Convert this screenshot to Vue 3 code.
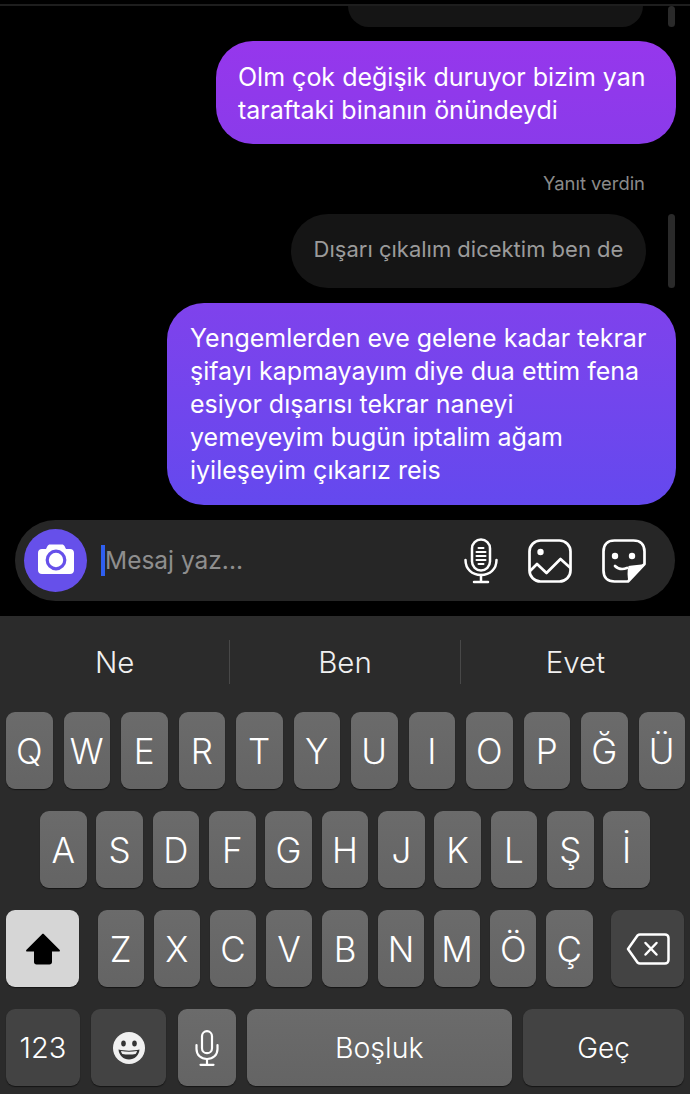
<template>
  <div class="screen">
    <section class="chat">
      <div class="top-line"></div>
      <div class="row row-cut">
        <div class="bubble-in cut"></div>
        <div class="reply-bar cut-bar"></div>
      </div>
      <div class="bubble-out first">
        Olm çok değişik duruyor bizim yan<br />taraftaki binanın önündeydi
      </div>
      <div class="reply-label">Yanıt verdin</div>
      <div class="row">
        <div class="bubble-in">Dışarı çıkalım dicektim ben de</div>
        <div class="reply-bar"></div>
      </div>
      <div class="bubble-out second">
        Yengemlerden eve gelene kadar tekrar<br />
        şifayı kapmayayım diye dua ettim fena<br />
        esiyor dışarısı tekrar naneyi<br />
        yemeyeyim bugün iptalim ağam<br />
        iyileşeyim çıkarız reis
      </div>
    </section>

    <div class="composer">
      <div class="camera">
        <svg class="camera-icon" width="38" height="32" viewBox="0 0 38 32">
          <path
            fill="#fff"
            d="M13 1.500h12c1.200 0 2 .6 2.500 1.600L29 6h4c2.500 0 4 1.600 4 4v17c0 2.500-1.500 4-4 4H5c-2.500 0-4-1.500-4-4V10c0-2.400 1.500-4 4-4h4l1.500-2.900C11 2.100 11.800 1.500 13 1.500z"
          />
          <circle cx="19" cy="17" r="8.800" fill="none" stroke="#6650ea" stroke-width="3.200" />
        </svg>
      </div>
      <div class="caret"></div>
      <div class="placeholder">Mesaj yaz...</div>
      <div class="composer-icons">
        <svg width="34" height="46" viewBox="0 0 34 46" fill="none" stroke="#fff" stroke-width="2.500" stroke-linecap="round">
          <rect x="8" y="1.500" width="18" height="31" rx="9" />
          <path d="M1.500 22c0 9 6.500 15 15.500 15s15.500-6 15.500-15" />
          <path d="M17 37v7M10 44h14" />
          <path stroke-width="2" d="M14.500 10h5M12.500 14h9M12.500 18h9M12.500 22h9M14.500 26h5" />
        </svg>
        <svg width="44" height="44" viewBox="0 0 44 44" fill="none" stroke="#fff" stroke-width="2.700">
          <rect x="1.500" y="1.500" width="41" height="41" rx="11" />
          <path d="M2 32l7-7 9.500 9 14-14 10 9" stroke-linejoin="round" />
          <circle cx="12.500" cy="13" r="3.200" fill="#fff" stroke="none" />
        </svg>
        <svg width="44" height="44" viewBox="0 0 44 44" fill="none" stroke="#fff" stroke-width="2.700">
          <path d="M42.500 25V12.500c0-7-4-11-11-11h-19c-7 0-11 4-11 11v19c0 7 4 11 11 11H26z" stroke-linejoin="round" />
          <path fill="#fff" stroke="none" d="M42.500 25c-3 1-12 1-16 2-1.500 5-1 11 0 15.500z" />
          <circle cx="13" cy="17" r="3.200" fill="#fff" stroke="none" />
          <circle cx="30" cy="17" r="3.200" fill="#fff" stroke="none" />
          <path d="M13 27c3 3 8 3.500 12 2" stroke-linecap="round" />
        </svg>
      </div>
    </div>

    <section class="keyboard">
      <div class="suggestions">
        <div class="suggestion">Ne</div>
        <div class="suggestion">Ben</div>
        <div class="suggestion">Evet</div>
      </div>
      <div class="keys-row">
        <button v-for="k in rowOne" :key="k" class="key">{{ k }}</button>
      </div>
      <div class="keys-row indented">
        <button v-for="k in rowTwo" :key="k" class="key">{{ k }}</button>
      </div>
      <div class="keys-row row-three">
        <button class="key shift">
          <svg width="36" height="32" viewBox="0 0 36 32">
            <path
              d="M17 1.200c.6-.6 1.400-.6 2 0l15.500 15.500c.8.800.4 1.800-.7 1.800H27v10.500c0 1.500-1 2.500-2.500 2.500h-13C10 31.500 9 30.500 9 29V18.500H2.200c-1.100 0-1.500-1-.7-1.800z"
              fill="#000"
            />
          </svg>
        </button>
        <div class="letters">
          <button v-for="k in rowThree" :key="k" class="key">{{ k }}</button>
        </div>
        <button class="key dark backspace">
          <svg width="44" height="32" viewBox="0 0 44 32" fill="none" stroke="#fff" stroke-width="2.500">
            <path d="M14 1.500h25c2 0 3.500 1.500 3.500 3.500v22c0 2-1.500 3.500-3.500 3.500H14c-1 0-1.700-.3-2.500-1L2 16 11.500 2.500c.8-.7 1.500-1 2.500-1z" stroke-linejoin="round" />
            <path d="M19.500 10l11 11.500M30.500 10l-11 11.500" stroke-linecap="round" />
          </svg>
        </button>
      </div>
      <div class="keys-row bottom">
        <button class="key dark num">123</button>
        <button class="key dark emoji">
          <svg width="32" height="32" viewBox="0 0 32 32">
            <circle cx="16" cy="16" r="16" fill="#f0f0f0" />
            <ellipse cx="10.500" cy="11.500" rx="2.300" ry="3" fill="#333" />
            <ellipse cx="21.500" cy="11.500" rx="2.300" ry="3" fill="#333" />
            <path d="M5.500 17.500c6 1.500 15 1.500 21 0-.5 6-5 10-10.500 10s-10-4-10.500-10z" fill="#333" />
            <path d="M8 19c5 1 11 1 16 0-.3 1.500-.8 2.300-1.500 3-4 .8-9 .8-13 0-.7-.7-1.200-1.500-1.500-3z" fill="#f0f0f0" />
          </svg>
        </button>
        <button class="key voice">
          <svg width="24" height="36" viewBox="0 0 24 36" fill="none" stroke="#fff" stroke-width="2.200" stroke-linecap="round">
            <rect x="7" y="1.200" width="10" height="22" rx="5" />
            <path d="M1.500 15v4c0 6 4.500 10 10.500 10s10.500-4 10.500-10v-4" />
            <path d="M12 29v5.500M5.500 34.800h13" />
          </svg>
        </button>
        <button class="key space">Boşluk</button>
        <button class="key dark go">Geç</button>
      </div>
    </section>
  </div>
</template>

<script setup>
const rowOne = ['Q', 'W', 'E', 'R', 'T', 'Y', 'U', 'I', 'O', 'P', 'Ğ', 'Ü']
const rowTwo = ['A', 'S', 'D', 'F', 'G', 'H', 'J', 'K', 'L', 'Ş', 'İ']
const rowThree = ['Z', 'X', 'C', 'V', 'B', 'N', 'M', 'Ö', 'Ç']
</script>

<style>
html,
body {
  background: #000;
}
</style>

<style scoped>
.screen {
  width: 690px;
  height: 1094px;
  overflow: hidden;
  background: #000;
  font-family: Inter, Roboto, "Liberation Sans", sans-serif;
  display: flex;
  flex-direction: column;
}

.chat {
  height: 520px;
  flex: none;
  display: flex;
  flex-direction: column;
  align-items: flex-end;
}

.top-line {
  align-self: stretch;
  height: 2px;
  margin-top: 4px;
  background: #1e1e1e;
}

.row {
  display: flex;
  align-items: stretch;
  gap: 22px;
  padding-right: 15px;
}

.row-cut {
  height: 21px;
}

.bubble-in {
  width: 355px;
  height: 74px;
  box-sizing: border-box;
  border-radius: 37px;
  background: #151515;
  color: #9b9b9b;
  font-size: 22px;
  line-height: 70px;
  text-align: center;
  white-space: nowrap;
}

.bubble-in.cut {
  width: 295px;
  height: 21px;
  margin-right: 3px;
  border-radius: 0 0 32px 32px;
}

.reply-bar {
  width: 7px;
  border-radius: 4px;
  background: #2a2a2a;
}

.bubble-out {
  margin-right: 14px;
  box-sizing: border-box;
  border-radius: 37px;
  color: #fff;
  font-size: 25px;
  line-height: 33px;
  white-space: nowrap;
}

.bubble-out.first {
  width: 460px;
  height: 103px;
  margin-top: 14px;
  padding: 20px 0 0 22px;
  background: linear-gradient(180deg, #9637ec, #8a3bea);
}

.bubble-out.second {
  width: 509px;
  height: 202px;
  margin-top: 15px;
  padding: 19px 0 0 23px;
  background: linear-gradient(180deg, #7f42ec, #6449ee);
}

.reply-label {
  margin: 28px 45px 20px 0;
  height: 22px;
  color: #8a8a8a;
  font-size: 18.400px;
  line-height: 22px;
}

.composer {
  height: 81px;
  flex: none;
  margin: 0 15px;
  display: flex;
  align-items: center;
  border-radius: 41px;
  background: #262626;
  padding-left: 9px;
}

.camera {
  width: 63px;
  height: 63px;
  flex: none;
  border-radius: 50%;
  background: #6650ea;
  display: flex;
  align-items: center;
  justify-content: center;
}

.camera-icon {
  margin-bottom: 3px;
}

.caret {
  width: 4px;
  height: 31px;
  margin-left: 14px;
  background: #2f5ff0;
}

.placeholder {
  margin-bottom: 2px;
  color: #8e8e8e;
  font-size: 24.500px;
  flex: 1;
}

.composer-icons {
  display: flex;
  align-items: center;
  gap: 30px;
  padding-right: 29px;
}

.keyboard {
  flex: 1;
  margin-top: 15px;
  background: #2b2b2b;
}

.suggestions {
  display: flex;
  height: 96px;
  box-sizing: border-box;
  padding-top: 24px;
}

.suggestion {
  flex: 1;
  height: 44px;
  text-align: center;
  color: #f0f0f0;
  font-size: 29.500px;
  font-weight: 350;
  line-height: 44px;
  border-right: 1px solid #484848;
}

.suggestion:last-child {
  border-right: 0;
}

.keys-row {
  display: flex;
  justify-content: space-between;
  height: 77px;
  margin-bottom: 22px;
  padding: 0 5px 0 6px;
}

.keys-row.indented {
  padding: 0 40px;
}

.keys-row.row-three,
.keys-row.bottom {
  padding: 0 6px;
}

.key {
  width: 46.500px;
  height: 77px;
  padding: 0;
  border: 0;
  border-radius: 9px;
  background: linear-gradient(180deg, #6b6b6b, #646464);
  box-shadow: 0 1px 1px #151515;
  color: #fff;
  font-family: inherit;
  font-size: 35px;
  font-weight: 350;
  display: flex;
  align-items: center;
  justify-content: center;
}

.key.dark {
  background: #434343;
}

.key.shift {
  width: 73px;
  background: #d6d6d6;
  flex: none;
}

.key.backspace {
  width: 73px;
  flex: none;
}

.letters {
  display: flex;
  justify-content: space-between;
  width: 495px;
}

.key.num {
  width: 74px;
  font-size: 29px;
}

.key.emoji {
  width: 75px;
}

.key.voice {
  width: 58px;
}

.key.space {
  width: 265px;
  font-size: 28.500px;
}

.key.go {
  width: 161px;
  font-size: 28px;
}
</style>
